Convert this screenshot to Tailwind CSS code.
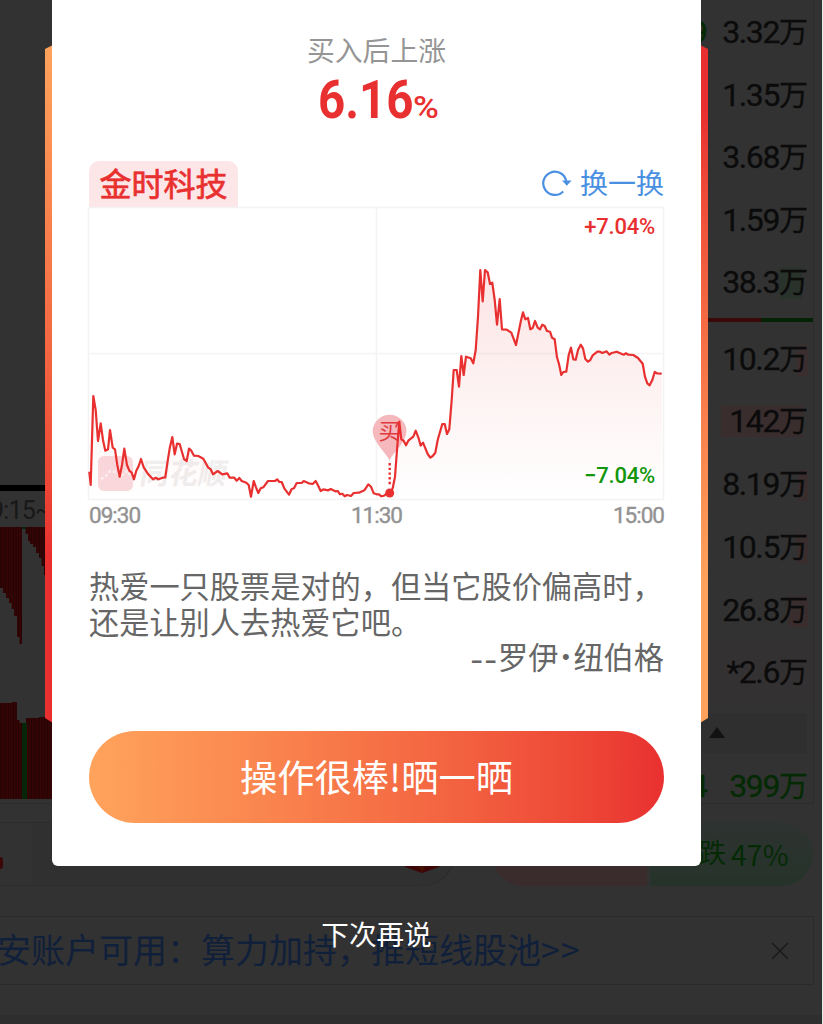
<!DOCTYPE html>
<html lang="zh-CN">
<head>
<meta charset="utf-8">
<title>买入后上涨</title>
<script src="https://cdn.jsdelivr.net/npm/@tailwindcss/browser@4"></script>
</head>
<body class="bg-[#323232]">
<div class="relative w-[823px] h-[1024px] overflow-hidden bg-[#323232] font-['Roboto','Noto_Sans_CJK_SC',sans-serif]">

  <!-- dimmed page -->
  <div class="flex flex-col w-[822px] h-full">
    <div class="flex h-[804px] shrink-0 w-[814px] justify-between border-r border-b border-[#2c2c2c]">
      <div class="flex flex-col w-[60px]">
        <div class="mt-[485px] h-[6px] bg-black"></div>
        <div class="h-[36px] flex items-center overflow-hidden text-[25px] leading-[36px] tracking-[-0.8px] text-[#181818] whitespace-nowrap pt-[3px]"><span class="-ml-[10px]">9:15~</span></div>
        <svg class="w-[60px] h-[272px] block shrink-0" viewBox="0 527 60 272">
          <defs>
            <pattern id="bars" width="2.6" height="10" patternUnits="userSpaceOnUse"><rect width="2.6" height="10" fill="#350405"/><rect width="0.9" height="10" fill="#240404"/></pattern>
          </defs>
          <path d="M0 527H22V644H19.500V637H17V616H14V609H11.500V603H9V598H6V593H3V588H0Z" fill="url(#bars)"/>
          <path d="M25.500 527H60V575H44V566H41.500V558H39V553H36V547H33V544H30V541H28V534H25.500Z" fill="url(#bars)"/>
          <rect x="22" y="527" width="4" height="2" fill="#06260a"/>
          <path d="M0 703H12V702H17V720H19.500V723H26V718H39V717H60V799H0Z" fill="url(#bars)"/>
          <rect x="22" y="723" width="5" height="76" fill="#06260a"/>
        </svg>
      </div>
      <div class="flex flex-col w-[125px] text-[32px] text-[#0b0b0b] tracking-[-1.4px] [-webkit-text-stroke:0.3px]">
        <div class="shrink-0 flex h-[63.500px] items-center justify-between pr-[5px]"><span class="text-[#042a04] ml-[2px]">9</span><span>3.32<span class="text-[29px] tracking-normal">万</span></span></div>
        <div class="shrink-0 flex h-[62.500px] items-center justify-end pr-[5px]"><span>1.35<span class="text-[29px] tracking-normal">万</span></span></div>
        <div class="shrink-0 flex h-[62.500px] items-center justify-end pr-[5px]"><span>3.68<span class="text-[29px] tracking-normal">万</span></span></div>
        <div class="shrink-0 flex h-[62.500px] items-center justify-end pr-[5px]"><span>1.59<span class="text-[29px] tracking-normal">万</span></span></div>
        <div class="shrink-0 flex h-[62.500px] items-center justify-end pr-[5px]"><span>38.3<span class="text-[29px] tracking-normal bg-linear-to-r from-[#2a332b] from-80% to-transparent to-80% leading-[31px] inline-block h-[31px]">万</span></span></div>
        <div class="shrink-0 flex h-[4px] mt-[4.500px] mb-[6px]"><div class="w-[73px] bg-[#3a0a0b]"></div><div class="flex-1 bg-[#042304]"></div></div>
        <div class="shrink-0 flex h-[62.600px] items-center justify-end pr-[5px]"><span>10.2<span class="text-[29px] tracking-normal bg-linear-to-r from-transparent from-62% via-[#3b2e2f] via-62% to-[#3b2e2f] leading-[31px] inline-block h-[31px]">万</span></span></div>
        <div class="shrink-0 flex h-[62.600px] items-center justify-end pr-[5px]"><span class="h-[31px] leading-[31px] pl-[8px] bg-linear-to-r from-[#392d2e] from-94% to-transparent to-94%">142<span class="text-[29px] tracking-normal">万</span></span></div>
        <div class="shrink-0 flex h-[62.600px] items-center justify-end pr-[5px]"><span>8.19<span class="text-[29px] tracking-normal bg-linear-to-r from-transparent from-66% via-[#392d2e] via-66% to-[#392d2e] leading-[31px] inline-block h-[31px]">万</span></span></div>
        <div class="shrink-0 flex h-[62.600px] items-center justify-end pr-[5px]"><span>10.5<span class="text-[29px] tracking-normal bg-linear-to-r from-transparent from-62% via-[#392d2e] via-62% to-[#392d2e] leading-[31px] inline-block h-[31px]">万</span></span></div>
        <div class="shrink-0 flex h-[62.600px] items-center justify-end pr-[5px]"><span>26.8<span class="text-[29px] tracking-normal bg-linear-to-r from-transparent from-30% via-[#392d2e] via-30% to-[#392d2e] leading-[31px] inline-block h-[31px]">万</span></span></div>
        <div class="shrink-0 flex h-[62.600px] items-center justify-end pr-[5px] bg-[#343132]"><span>*2.6<span class="text-[29px] tracking-normal">万</span></span></div>
        <div class="shrink-0 mt-[9px] mr-[6px] h-[40px] bg-[#2f2f2f] pl-[21px] pt-[14px]"><svg class="block w-[16px] h-[11px]" viewBox="0 0 16 11"><path d="M8 0L16 11H0Z" fill="#121212"/></svg></div>
        <div class="shrink-0 flex h-[51px] pt-[16px] items-center justify-between pr-[5px] text-[#042a04]"><span class="ml-[2px]">4</span><span>399<span class="text-[29px] tracking-normal">万</span></span></div>
      </div>
    </div>

    <div class="mt-[18px] h-[64px] shrink-0 flex">
      <div class="w-[455px] h-[64px] shrink-0 rounded-r-full border-y border-r border-[#2c2c2c] bg-[#303030] flex justify-between items-center overflow-hidden">
        <div class="w-[32px] h-full bg-[#323232] flex items-center pt-[17px]"><div class="w-[6px] h-[12px] -ml-[3px] rounded-full bg-[#3d0708]"></div></div>
        <svg class="w-[34px] h-[16px] mr-[15px] mt-[24px]" viewBox="0 0 34 16"><path d="M0 0H34V9L17 15L0 9Z" fill="#3d0708"/><path d="M12 4L17 15L22 4Z" fill="#441306"/></svg>
      </div>
      <div class="ml-[37px] w-[155px] rounded-l-full rounded-br-lg bg-[#3a2c2d]"></div>
      <div class="ml-[3px] w-[163px] rounded-r-full rounded-bl-lg bg-linear-to-b from-[#2e3331] to-[#25332a] flex items-center text-[28px] text-[#042a04] pl-[49px]"><span class="text-[27px]">跌</span><span class="ml-[5px] tracking-[0.3px] font-['Noto_Sans_CJK_SC',sans-serif]">47%</span></div>
    </div>

    <div class="mt-[30px] w-[814px] h-[69px] shrink-0 border-y border-r border-[#2a2a2a] flex items-center justify-between">
      <div class="-ml-[3px] text-[34px] leading-[40px] text-[#11203a] whitespace-nowrap font-['Noto_Sans_CJK_SC',sans-serif] pb-[3px]">安账户可用：算力加持，推短线股池<span class="tracking-[1px]">&gt;&gt;</span></div>
      <svg class="w-[18px] h-[18px] mr-[24px]" viewBox="0 0 18 18"><path d="M1 1L17 17M17 1L1 17" stroke="#1a1a1a" stroke-width="1.600" fill="none"/></svg>
    </div>
    <div class="mt-auto h-[9px] bg-[#2e2e2e]"></div>
  </div>
  <div class="absolute right-0 top-0 w-px h-full bg-[#e8e8e8]"></div>

  <!-- coloured edges behind the dialog -->
  <div class="absolute left-[45px] top-[45px] w-[8px] h-[678px] bg-linear-to-b from-[#ffa35c] to-[#e93030] to-75% [clip-path:polygon(0_4px,100%_0,100%_100%,0_calc(100%-5px))]"></div>
  <div class="absolute left-[700px] top-[45px] w-[8px] h-[678px] bg-linear-to-b from-[#e93030] from-10% to-[#ffa35c] to-80% [clip-path:polygon(0_0,100%_4px,100%_calc(100%-5px),0_100%)]"></div>

  <!-- dialog -->
  <div class="absolute left-[52px] top-0 w-[649px] h-[866px] rounded-b-[6px] bg-white px-[37px] flex flex-col font-['Noto_Sans_CJK_SC',sans-serif]">
    <div class="mt-[35px] h-[28px] leading-[28px] text-[27.800px] text-[#959595] text-center">买入后上涨</div>
    <div class="mt-[7px] h-[60px] flex justify-center items-baseline text-[#e93030] font-['Roboto',sans-serif]">
      <span class="w-[95px] ml-[4px] flex"><span class="text-[54px] leading-[60px] font-bold tracking-[0px] origin-left scale-x-[0.88]">6.16</span></span><span class="w-[26px]"><span class="inline-block text-[32px] font-medium origin-left scale-x-110">%</span></span>
    </div>
    <div class="mt-[31px] h-[46px] flex justify-between">
      <div class="w-[149px] rounded-t-[10px] bg-[#fce6e8] text-[#e93030] text-[32px] leading-[43px] [-webkit-text-stroke:0.7px] text-center">金时科技</div>
      <div class="flex items-center text-[#4a90e2] text-[28px] leading-[43px] h-[43px]">
        <svg class="w-[30px] h-[26px] mr-[8px]" viewBox="0 0 30 26"><path d="M21.200 21.400A11.600 11.600 0 1 1 24.200 11" fill="none" stroke="#4a90e2" stroke-width="2.200"/><path d="M20 10.500H29.600L24.800 15.800Z" fill="#4a90e2"/></svg>
        <span>换一换</span>
      </div>
    </div>
    <div class="relative h-[293px]">
      <svg class="block w-[575px] h-[293px] overflow-visible" viewBox="89 207 575 293">
        <defs>
          <linearGradient id="area" gradientUnits="userSpaceOnUse" x1="0" y1="270" x2="0" y2="499"><stop offset="0" stop-color="#e93030" stop-opacity="0.13"/><stop offset="1" stop-color="#e93030" stop-opacity="0"/></linearGradient>
        </defs>
        <path d="M89 207.500H663.500V499.500H88.500V207.500M376.500 207V499M89 353.500H663" fill="none" stroke="#f3f3f3" stroke-width="1.500"/>
        <rect x="98" y="456" width="35" height="35" rx="6" fill="#f9d9dc"/>
        <path d="M101 479l5-3 4-5 6 1 5 4 6-5 3 4" fill="none" stroke="#fdf0f1" stroke-width="2.500" stroke-dasharray="3 2"/>
        <text x="139" y="484" font-family="Noto Sans CJK SC" font-size="29" font-weight="700" fill="#f1eeee" transform="translate(85 0) skewX(-10)">同花顺</text>
        <path id="fill" fill="url(#area)"/>
        <path d="M389.500 460.500C386 452 372.700 443 372.700 430A17 17 0 0 1 406.500 430C406.500 443 393 452 389.500 460.500Z" fill="#f5b8bc"/>
        <text x="378.500" y="439" font-family="Noto Sans CJK SC" font-size="22" fill="#e13a3e">买</text>
        <path d="M389.700 463V486" stroke="#e93030" stroke-width="2.400" stroke-dasharray="2.400 2.300"/>
        <path id="line" fill="none" stroke="#e93030" stroke-width="2.200" stroke-linejoin="round"/>
        <circle cx="389.700" cy="493" r="4.500" fill="#e93030"/>
      </svg>
      <div class="absolute right-[9px] top-[6px] text-[22px] leading-[28px] font-medium text-[#e93030] font-['Roboto',sans-serif] tracking-[-0.200px]">+7.04%</div>
      <div class="absolute right-[9px] bottom-[10px] text-[22px] leading-[28px] font-medium text-[#12960c] font-['Roboto',sans-serif] tracking-[-0.200px]">−7.04%</div>
    </div>
    <div class="grid grid-cols-3 h-[30px] items-center text-[22.500px] leading-[30px] text-[#929292] font-['Roboto',sans-serif] tracking-[-1px] [-webkit-text-stroke:0.4px]">
      <span>09:30</span><span class="text-center">11:30</span><span class="text-right">15:00</span>
    </div>
    <div class="mt-[38px] text-[30.200px] leading-[35.500px] text-[#666666] whitespace-nowrap">热爱一只股票是对的，但当它股价偏高时，<br>还是让别人去热爱它吧。</div>
    <div class="h-[35.500px] flex justify-end text-[30.200px] leading-[35.500px] text-[#666666] whitespace-nowrap"><span class="text-[37px] tracking-[1px]">--</span><span>罗伊</span><span class="w-[15px] text-center text-[22px] font-['Liberation_Sans',sans-serif]">•</span><span>纽伯格</span></div>
    <div class="mt-[56px] h-[92px] rounded-full bg-linear-to-r from-[#ffa35c] to-[#e93030] text-white text-[37.300px] leading-[90px] text-center">操作很棒!晒一晒</div>
  </div>

  <div class="absolute left-[52px] top-[917px] w-[649px] text-center text-[27.600px] leading-[32px] text-white font-['Noto_Sans_CJK_SC',sans-serif]">下次再说</div>
</div>
<script>
  const pts = "89.3,471.7 90.7,485 93.3,396 95.7,410 98,441 100.7,423.3 103,440 105.3,450.7 108,449.3 110,430 112.7,447.7 115,449.3 117.3,465 119.7,476.7 122,465 124.3,448.7 127,465 129.3,470.7 131.7,472.7 134,479.3 136.3,470.7 138.7,466 141,459 143.7,467.3 148.3,474.3 153,479.3 155.7,477.7 158.3,479.3 162.7,477.7 165.3,477.3 167.3,463.3 169.7,448.3 172.3,437 174.7,454.3 177,443.7 179.7,444 184,459 186.7,461 189,448.7 191.3,450.7 194,455.7 198.3,456 203.3,458.7 208,467.3 210.7,469.3 213,474.3 217.7,471 222.3,474.3 227.3,473.3 229.7,477.7 234.3,477.7 236.7,480.7 239.3,478 241.7,481 246.3,482.7 248.7,485 251,496.7 253.7,481 256,487.3 258.3,493 260.7,488.3 263.3,487.3 268,481 275,481 277.3,479.3 279.3,482 281.7,482 284.3,488.3 289,494.7 291.7,489 294,488.3 296.7,483 301.7,483 303.7,481 308.7,483.3 312.7,484 315.7,481 318.3,486 320.7,491 323.3,489.3 328.3,490.3 330.7,489 335.3,491.3 337.7,491 340,494.3 342.3,493.7 344.7,496.3 347,495 351,496 353.7,493 359,492.7 364.3,490.3 368.3,484.3 371,486.7 373.7,493.3 376.7,494.3 379,494.3 381.3,496.3 384,495.7 386.7,493.7 389.7,493.3 392.7,488.3 395,476.7 397,450 399.3,421.7 401.3,439.3 403.7,440.7 406,445.3 408.3,440.7 413.3,436.7 415.7,430.7 418.3,437.3 420.7,445.7 423,442.7 427.7,454 430.3,457.7 432.7,456 435.3,452.7 437.7,440 442.3,424 444.7,424 447,434 449.3,429.3 451.7,400 453.7,370 456.7,370 459,386.7 461.3,356 463.7,375 466,356.7 470.7,358.3 473.3,363.3 475.7,350 478,316.7 480.3,270 482.7,301.3 485,270 487.7,272.3 490,284 492.3,282.7 494.7,300 497,324.7 499.7,299 502,329.3 506.7,329.7 511.3,332.7 516,345 520.7,321.7 523,312.3 525.3,319.3 528,318 530.3,329.3 532.7,328 535,321 537.7,327.7 540,329.3 542.3,324.7 544.7,326 547,331 550,331.7 552,337.7 554.7,339.3 557,357.3 559,364 561.3,375 563.3,372 566.3,371.7 568.7,355 571,347.7 573.3,359.3 575.7,359.7 578,350 580.7,344.7 583,348.3 585.3,359 588,361.7 590.3,360 592.7,355.3 597.3,351.7 600,351.7 602.3,353 606.7,351.3 609.3,354.7 611.7,353 616.7,351.7 623.7,354.7 626,353.3 628.3,354.7 633.3,355 638,358 642.7,363.7 645,376.7 647.3,383.3 649.7,385.3 652.3,380 654.7,372 657,373.3 661.7,373.7";
  document.getElementById("line").setAttribute("d", "M" + pts);
  document.getElementById("fill").setAttribute("d", "M" + pts + " 661.7,499 89.3,499Z");
</script>
</body>
</html>
